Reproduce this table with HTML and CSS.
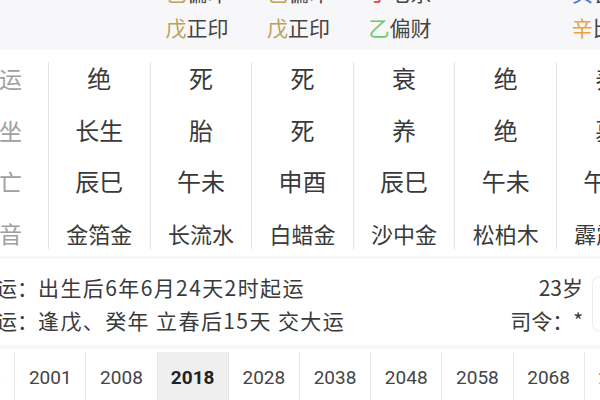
FILE: index.html
```html
<!DOCTYPE html>
<html lang="zh">
<head>
<meta charset="utf-8">
<link rel="stylesheet" href="styles.css">
</head>
<body>
<div class="page">
  <section class="shishen">
    <div class="ss-row ss-row-top">
      <div class="ss-cell"></div>
      <div class="ss-cell"></div>
      <div class="ss-cell"><span class="gan earth">己</span>偏印</div>
      <div class="ss-cell"><span class="gan earth">己</span>偏印</div>
      <div class="ss-cell"><span class="gan fire">丁</span>七杀</div>
      <div class="ss-cell"></div>
      <div class="ss-cell"><span class="gan water">癸</span>食神</div>
    </div>
    <div class="ss-row">
      <div class="ss-cell"></div>
      <div class="ss-cell"></div>
      <div class="ss-cell"><span class="gan earth">戊</span>正印</div>
      <div class="ss-cell"><span class="gan earth">戊</span>正印</div>
      <div class="ss-cell"><span class="gan wood">乙</span>偏财</div>
      <div class="ss-cell"></div>
      <div class="ss-cell"><span class="gan metal">辛</span>比肩</div>
    </div>
  </section>

  <section class="chart">
    <div class="col col-label">
      <div class="cell">星运</div>
      <div class="cell">自坐</div>
      <div class="cell">空亡</div>
      <div class="cell">纳音</div>
    </div>
    <div class="col">
      <div class="cell">绝</div>
      <div class="cell">长生</div>
      <div class="cell">辰巳</div>
      <div class="cell nayin">金箔金</div>
    </div>
    <div class="col">
      <div class="cell">死</div>
      <div class="cell">胎</div>
      <div class="cell">午未</div>
      <div class="cell nayin">长流水</div>
    </div>
    <div class="col">
      <div class="cell">死</div>
      <div class="cell">死</div>
      <div class="cell">申酉</div>
      <div class="cell nayin">白蜡金</div>
    </div>
    <div class="col">
      <div class="cell">衰</div>
      <div class="cell">养</div>
      <div class="cell">辰巳</div>
      <div class="cell nayin">沙中金</div>
    </div>
    <div class="col">
      <div class="cell">绝</div>
      <div class="cell">绝</div>
      <div class="cell">午未</div>
      <div class="cell nayin">松柏木</div>
    </div>
    <div class="col">
      <div class="cell">养</div>
      <div class="cell">墓</div>
      <div class="cell">午未</div>
      <div class="cell nayin">霹雳火</div>
    </div>
  </section>

  <section class="info">
    <div class="info-left">
      <div class="info-line">起运：<span class="info-value">出生后6年6月24天2时起运</span></div>
      <div class="info-line">交运：<span class="info-value">逢戊、癸年 立春后15天 交大运</span></div>
    </div>
    <div class="info-right">
      <div class="info-line">23岁</div>
      <div class="info-line">司令：*</div>
    </div>
    <div class="edge"></div>
  </section>

  <nav class="years">
    <div class="year">1995</div>
    <div class="year">2001</div>
    <div class="year">2008</div>
    <div class="year active">2018</div>
    <div class="year">2028</div>
    <div class="year">2038</div>
    <div class="year">2048</div>
    <div class="year">2058</div>
    <div class="year">2068</div>
    <div class="year">2078</div>
  </nav>
</div>
</body>
</html>
```

FILE: styles.css
```css
html, body {
  margin: 0;
  padding: 0;
}
body {
  width: 600px;
  height: 400px;
  overflow: hidden;
  background: #f7f6f9;
  font-family: "Noto Sans CJK SC", "Noto Sans", sans-serif;
  color: #3a3a3a;
}
.page {
  width: 600px;
}

/* ten-gods rows */
.shishen {
  margin-top: -24px;
}
.ss-row {
  display: grid;
  grid-template-columns: 48px repeat(6, 101.6px);
  height: 32px;
  align-items: center;
  font-size: 21px;
  line-height: 32px;
}
.ss-row-top {
  margin-bottom: 3px;
}
.ss-cell {
  text-align: center;
  padding-right: 7px;
  white-space: nowrap;
  color: #444;
}
.gan.earth { color: #bba35a; }
.gan.wood { color: #6cc86a; }
.gan.metal { color: #e6a544; }
.gan.fire { color: #d9474f; }
.gan.water { color: #4b78d0; }

/* chart */
.chart {
  display: grid;
  grid-template-columns: 48px repeat(6, 101.6px);
  background: #fff;
  margin-top: 7px;
  padding: 12px 0 7px;
}
.col {
  display: flex;
  flex-direction: column;
  gap: 19.5px;
  border-left: 1px solid #e4e4e4;
}
.col-label {
  border-left: none;
  align-items: flex-end;
  padding-right: 26px;
  color: #a0a0a0;
}
.cell {
  height: 32px;
  line-height: 32px;
  font-size: 24px;
  text-align: center;
  white-space: nowrap;
}
.col-label .cell {
  font-size: 23px;
}
.cell.nayin {
  font-size: 22px;
}

/* info */
.info {
  display: flex;
  background: #fff;
  margin-top: 3px;
  padding: 12px 0 8px;
}
.info-left {
  flex: 1;
  margin-left: -25px;
  white-space: nowrap;
}
.info-value {
  letter-spacing: 1.4px;
}
.info-right {
  display: flex;
  flex-direction: column;
  align-items: flex-end;
  white-space: nowrap;
}
.info-line {
  height: 33px;
  line-height: 33px;
  font-size: 21px;
  color: #3a3a3a;
}
.edge {
  flex: 0 0 8px;
  margin-left: 9px;
  align-self: center;
  height: 56px;
  border: 1px solid #ececec;
  border-right: none;
  border-radius: 8px 0 0 8px;
  box-sizing: border-box;
}

/* years */
.years {
  display: flex;
  margin-left: -56px;
  margin-top: 4px;
  padding-top: 3px;
  background: #fff;
}
.year {
  flex: 0 0 71.2px;
  box-sizing: border-box;
  border-right: 1px solid #e6e6e6;
  height: 52px;
  line-height: 52px;
  text-align: center;
  font-family: Roboto, "Noto Sans", sans-serif;
  font-size: 19px;
  color: #444;
}
.year.active {
  background: #efefef;
  font-weight: bold;
  color: #222;
}
```
